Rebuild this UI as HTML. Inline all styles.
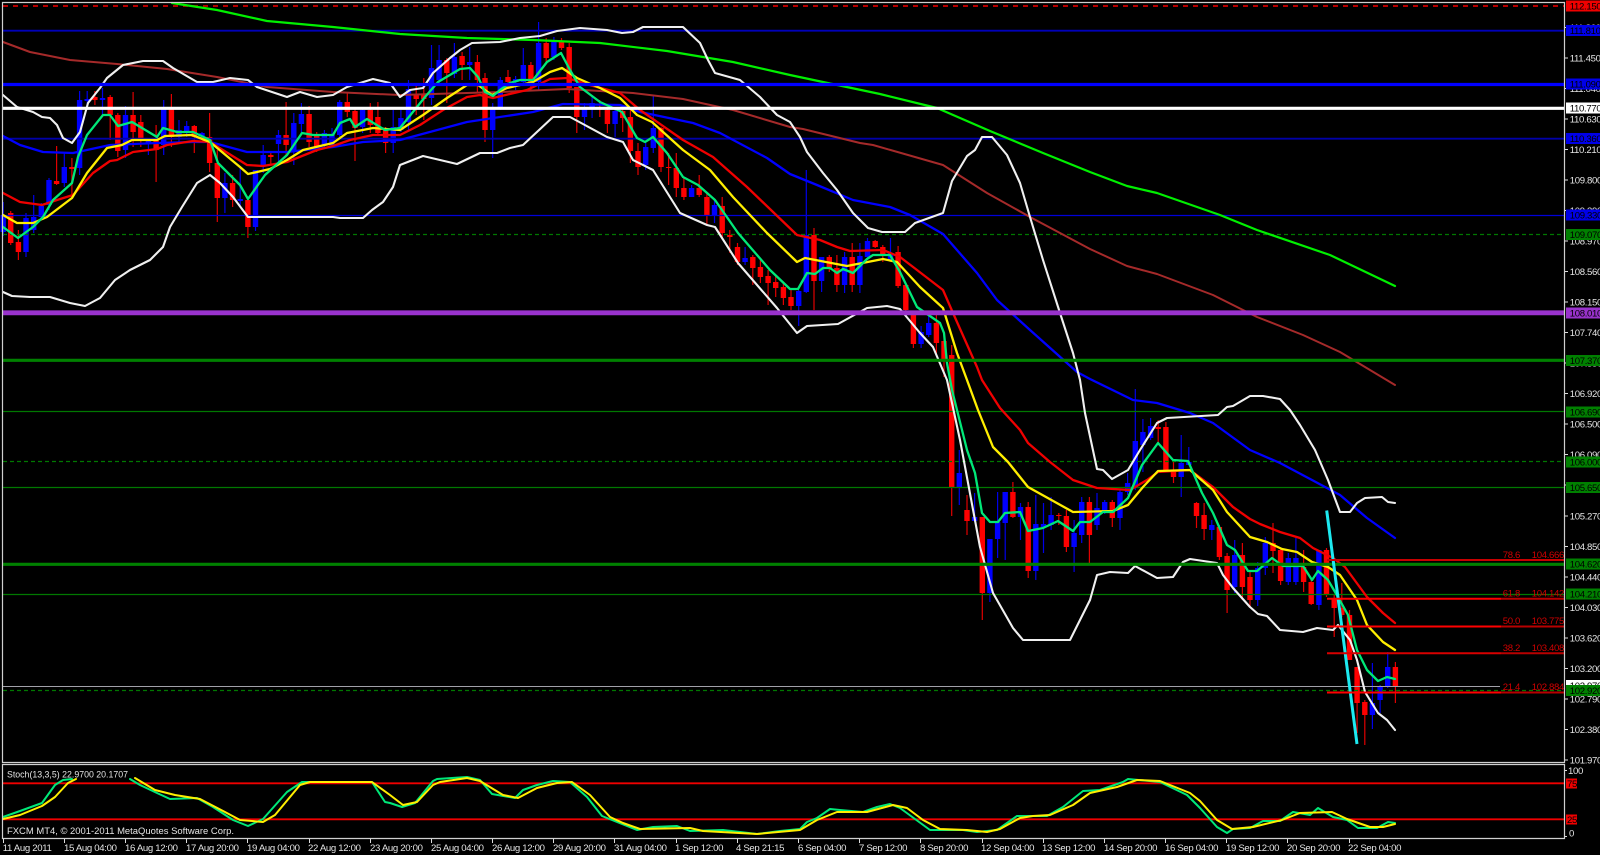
<!DOCTYPE html>
<html><head><meta charset="utf-8"><title>FXCM MT4 chart</title>
<style>
html,body{margin:0;padding:0;background:#000;width:1600px;height:855px;overflow:hidden}
svg{display:block;position:absolute;left:0;top:0}
text{font-family:"Liberation Sans",sans-serif;font-size:9.6px;letter-spacing:-.33px;fill:#e4e4e4}
.k{fill:#000}
.f{fill:#d00000}
.l{fill:none;stroke-linejoin:round;stroke-linecap:round}
</style></head><body>
<svg width="1600" height="855" viewBox="0 0 1600 855" xmlns="http://www.w3.org/2000/svg">
<rect width="1600" height="855" fill="#000"/>

<!-- red candles -->
<path fill="none" stroke="#e00000" stroke-width="1.2" d="M10.7 211V245M18.4 230V260M56.6 146V185M71.9 158V197M94.9 91V105M110.2 95V140M117.8 113V157M133.1 92V147M140.8 115V147M156.1 125V182M171.4 94V147M194.3 125V153M209.6 113V172M217.3 150V222M232.6 175V207M247.9 198V238M270.8 152V165M286.1 102V155M309.1 106V147M316.7 132V152M347.3 93V117M355 107V161M370.3 103V133M377.9 102V135M385.6 127V153M416.2 86V115M423.8 78V120M446.8 58V103M462.1 52V80M477.4 55V92M485 73V142M508 70V88M530.9 62V90M546.2 38V63M561.5 38V50M569.2 43V93M576.8 87V133M599.8 100V117M607.4 107V133M622.7 107V132M630.4 110V163M638 143V175M661 127V172M668.6 153V185M676.3 153V197M683.9 178V200M699.2 175V197M706.9 192V225M722.2 197V238M729.8 230V253M737.5 243V265M752.8 255V285M760.4 260V283M768.1 270V305M775.7 275V297M783.4 283V305M791 290V310M814 228V310M829.3 255V272M836.9 255V292M852.2 243V292M875.2 240V248M882.8 245V262M898.1 246V288M905.8 285V312M913.4 315V348M936.4 315V355M944 332V377M951.7 345V516M967 495V535M982.3 517V620M1012.9 482V518M1028.2 502V578M1058.8 513V525M1066.4 510V552M1089.4 497V563M1112.3 500V527M1158.2 420V443M1165.9 422V472M1173.5 462V483M1196.5 502V528M1204.1 503V540M1219.4 525V560M1227.1 553V613M1242.4 543V600M1250 572V607M1273 523V573M1280.6 548V585M1303.6 550V592M1311.2 580V605M1326.5 548V597M1334.2 595V637M1341.8 583V617M1349.5 610V660M1357.1 667V733M1364.8 700V745M1395.4 662V703"/>
<path fill="none" stroke="#ff0000" stroke-width="5.4" d="M10.7 213V243M18.4 242V252M56.6 181V184M71.9 167V169M94.9 97V100M110.2 97V115M117.8 115V151M133.1 115V132M140.8 122V138M156.1 140V150M171.4 107V137M194.3 126V137M209.6 137V163M217.3 163V198M232.6 183V200M247.9 200V227M270.8 155V157M286.1 135V145M309.1 114V142M316.7 134V147M347.3 102V112M355 111V128M370.3 110V125M377.9 117V133M385.6 130V143M416.2 95V99M423.8 95V99M446.8 60V73M462.1 56V65M477.4 62V80M485 78V130M508 77V82M530.9 65V82M546.2 43V58M561.5 42V48M569.2 47V88M576.8 87V117M599.8 107V109M607.4 110V124M622.7 111V118M630.4 117V151M638 151V167M661 128V167M668.6 167V168M676.3 168V188M683.9 188V197M699.2 188V195M706.9 197V215M722.2 206V233M729.8 235V237M737.5 247V262M752.8 257V268M760.4 267V277M768.1 276V283M775.7 282V288M783.4 287V298M791 297V306M814 235V281M829.3 257V268M836.9 268V285M852.2 257V285M875.2 241V247M882.8 247V255M898.1 252V286M905.8 285V310M913.4 315V344M936.4 323V343M944 341V360M951.7 355V488M967 510V521M982.3 517V593M1012.9 492V517M1028.2 507V571M1058.8 515V516M1066.4 516V547M1089.4 502V535M1112.3 502V518M1158.2 427V429M1165.9 427V470M1173.5 470V477M1196.5 503V516M1204.1 515V529M1219.4 527V557M1227.1 556V590M1242.4 555V587M1250 577V600M1273 543V551M1280.6 550V581M1303.6 567V582M1311.2 582V604M1326.5 550V595M1334.2 599V608M1341.8 608V615M1349.5 615V660M1357.1 667V703M1364.8 702V715M1395.4 667V687"/>
<!-- blue candles -->
<path fill="none" stroke="#0000e8" stroke-width="1.2" d="M3.2 202V236M26 213V257M33.7 195V233M41.3 203V219M49 178V210M64.3 152V187M79.6 91V175M87.2 91V110M102.5 88V115M125.5 106V158M148.4 140V155M163.7 100V155M179 120V143M186.7 121V137M202 132V140M224.9 173V213M240.2 168V205M255.5 170V231M263.2 145V173M278.5 130V165M293.8 113V165M301.4 103V135M324.4 130V147M332 128V147M339.7 100V137M362.6 107V133M393.2 110V153M400.9 110V132M408.5 80V130M431.5 45V105M439.1 45V85M454.4 43V78M469.7 47V80M492.7 103V158M500.3 77V110M515.6 76V90M523.3 48V85M538.6 22V90M553.9 37V60M584.5 103V130M592.1 97V118M615.1 108V137M645.7 143V170M653.3 95V153M691.6 185V197M714.5 200V223M745.1 247V265M798.7 290V326M806.3 170V293M821.6 257V292M844.6 252V293M859.9 243V293M867.5 238V258M890.5 238V260M921.1 326V348M928.7 315V337M959.3 450V505M974.6 493V522M989.9 539V602M997.6 492V558M1005.2 492V560M1020.5 503V540M1035.8 495V580M1043.5 503V553M1051.1 497V530M1074.1 520V572M1081.7 497V543M1097 493V530M1104.7 500V514M1120 490V530M1127.6 473V495M1135.3 389V490M1142.9 419V472M1150.6 418V440M1181.2 435V497M1188.8 447V465M1211.8 520V540M1234.7 540V593M1257.7 562V606M1265.3 537V575M1288.3 553V585M1295.9 538V585M1318.9 550V610M1372.4 663V729M1380.1 685V713M1387.7 652V688"/>
<path fill="none" stroke="#0000ff" stroke-width="5.4" d="M3.2 215V232M26 218V252M33.7 217V230M41.3 206V217M49 180V205M64.3 167V183M79.6 100V168M87.2 99V101M102.5 98V100M125.5 115V150M148.4 141V143M163.7 107V145M179 130V137M186.7 126V133M202 133V136M224.9 183V198M240.2 199V201M255.5 170V227M263.2 155V165M278.5 135V144M293.8 123V152M301.4 114V124M324.4 133V145M332 134V147M339.7 102V135M362.6 110V127M393.2 127V143M400.9 118V130M408.5 89V122M431.5 68V98M439.1 60V80M454.4 57V74M469.7 62V65M492.7 107V130M500.3 80V107M515.6 79V82M523.3 65V82M538.6 43V82M553.9 42V57M584.5 108V117M592.1 103V108M615.1 111V124M645.7 147V165M653.3 128V148M691.6 188V197M714.5 205V215M745.1 258V262M798.7 291V306M806.3 235V292M821.6 257V281M844.6 257V285M859.9 256V285M867.5 241V257M890.5 253V260M921.1 332V344M928.7 323V335M959.3 473V488M974.6 517V521M989.9 539V593M997.6 522V539M1005.2 492V523M1020.5 507V517M1035.8 524V571M1043.5 524V527M1051.1 515V525M1074.1 533V547M1081.7 502V535M1097 508V525M1104.7 502V513M1120 492V518M1127.6 483V492M1135.3 441V487M1142.9 432V445M1150.6 426V438M1181.2 463V477M1188.8 462V465M1211.8 525V530M1234.7 555V587M1257.7 568V600M1265.3 543V568M1288.3 558V582M1295.9 558V582M1318.9 550V605M1372.4 703V715M1380.1 686V700M1387.7 667V687"/>

<!-- thin horizontals -->
<g fill="none">
<path stroke="#d00000" stroke-width="1.8" stroke-dasharray="5 5" d="M3 6H1564"/>
<path stroke="#0000b8" stroke-width="1.8" d="M3 30.7H1564"/>
<path stroke="#0000a8" stroke-width="1.8" d="M3 138.7H1564"/>
<path stroke="#0000d8" stroke-width="1.2" d="M3 215.5H1564"/>
<path stroke="#007800" stroke-width="1.2" stroke-dasharray="4 3" d="M3 234.5H1564"/>
<path stroke="#007800" stroke-width="1.2" d="M3 411.5H1564"/>
<path stroke="#007800" stroke-width="1.2" stroke-dasharray="4 3" d="M3 461.5H1564"/>
<path stroke="#007800" stroke-width="1.2" d="M3 487.5H1564"/>
<path stroke="#007800" stroke-width="1.2" d="M3 594.5H1564"/>
<path stroke="#a0a0a8" stroke-width="1" d="M3 686.5H1500"/>
<path stroke="#007800" stroke-width="1.2" stroke-dasharray="4 3" d="M3 690.5H1564"/>
</g>

<!-- lime / brown / blue MAs -->
<polyline class="l" stroke="#00f000" stroke-width="2.2" points="172,3 217,10 267,21 333,27 400,34 467,38 533,40 600,43 667,51 733,62 790,75 823,82 880,94 937,108 990,131 1043,153 1090,172 1127,186 1157,193 1220,215 1257,230 1330,255 1395,286"/>
<polyline class="l" stroke="#a52a2a" stroke-width="2" points="3,42 30,52 70,60 117,64 167,69 217,77 267,87 333,92 400,95 433,94 500,92 567,89 633,93 683,99 733,110 790,127 803,129 860,143 873,145 943,165 987,193 1030,217 1090,249 1127,266 1157,274 1213,295 1257,317 1303,335 1340,352 1395,385"/>
<polyline class="l" stroke="#0000ff" stroke-width="2.3" points="3,136 20,145 43,152 73,153 110,145 157,143 193,142 210,142 247,152 287,152 333,147 363,142 400,140 467,122 533,112 563,104 620,105 640,112 693,123 720,133 767,158 790,174 817,185 853,200 890,207 910,215 943,234 977,273 997,300 1030,330 1077,372 1090,379 1133,400 1157,403 1190,413 1213,423 1250,450 1280,463 1312,480 1340,495 1367,518 1395,538"/>

<!-- Bollinger -->
<polyline class="l" stroke="#f0f0f0" stroke-width="2.1" points="3,95 17,107 33,112 42,117 50,118 57,125 63,138 72,143 80,132 88,103 100,88 107,78 123,65 143,61 163,61 173,68 197,82 213,82 230,78 248,80 257,87 287,97 300,92 317,97 333,95 347,87 373,79 390,83 400,97 410,90 423,88 433,73 450,58 460,50 472,43 500,42 520,38 540,36 557,31 580,28 607,30 622,33 633,32 643,27 683,27 700,43 708,60 715,73 740,80 760,97 777,115 790,122 800,137 807,152 823,173 837,190 853,213 868,228 882,232 905,232 915,223 943,213 952,181 967,156 975,150 982,137 992,137 1007,155 1020,183 1030,217 1043,260 1060,313 1073,353 1080,380 1085,413 1097,469 1103,470 1112,479 1128,470 1140,450 1157,423 1167,418 1218,415 1227,407 1233,406 1250,396 1263,396 1280,399 1290,410 1300,425 1315,450 1328,480 1340,512 1350,512 1357,503 1365,498 1382,497 1388,502 1395,503"/>
<polyline class="l" stroke="#f0f0f0" stroke-width="2.1" points="3,292 12,296 30,297 50,297 70,303 85,306 100,298 115,280 130,270 150,260 163,247 170,227 182,207 197,183 210,175 220,183 233,197 248,217 333,217 340,218 363,218 372,210 383,202 393,187 400,165 423,156 457,164 480,153 497,153 510,148 523,145 553,117 570,117 583,124 607,137 623,142 633,160 653,170 680,213 707,225 715,227 738,263 777,308 797,333 807,326 838,324 867,308 887,306 900,309 920,333 933,347 947,380 960,440 980,547 993,593 1013,628 1023,640 1070,640 1090,600 1097,575 1110,572 1128,573 1135,566 1157,578 1173,577 1183,562 1190,559 1217,563 1223,575 1233,588 1250,607 1258,614 1267,616 1280,630 1303,632 1317,628 1333,630 1338,625 1350,640 1357,660 1365,692 1378,713 1387,720 1395,730"/>

<!-- red MA -->
<polyline class="l" stroke="#f00000" stroke-width="2.3" points="3,193 20,202 42,205 57,200 73,195 93,173 110,161 117,160 133,152 157,149 167,145 193,141 210,142 247,165 263,166 287,162 317,150 333,146 350,140 373,135 400,135 420,125 443,110 467,97 480,95 493,98 527,90 550,79 567,78 593,86 620,93 640,110 683,140 713,157 747,187 797,235 820,240 837,247 850,251 883,250 900,257 917,270 943,290 953,313 977,367 982,380 1000,408 1020,430 1028,443 1050,462 1073,480 1097,488 1130,490 1147,480 1158,472 1190,470 1213,487 1233,507 1250,519 1260,524 1280,532 1300,538 1313,548 1333,558 1345,567 1367,597 1383,613 1395,623"/>
<!-- yellow MA -->
<polyline class="l" stroke="#ffee00" stroke-width="2.3" points="3,215 17,223 33,223 47,217 72,198 87,173 107,148 122,145 132,140 157,140 165,136 192,135 210,142 240,167 248,174 270,169 287,160 303,150 333,143 347,133 373,128 400,130 423,115 447,98 467,85 478,85 492,95 507,88 533,82 550,72 562,68 577,78 600,88 620,98 637,115 652,122 683,150 710,170 733,197 767,233 797,262 805,258 847,266 883,259 897,262 920,287 943,308 957,353 967,380 978,410 993,447 1008,462 1028,487 1073,512 1113,511 1128,505 1143,487 1158,471 1190,470 1213,490 1227,512 1250,537 1267,542 1282,549 1297,552 1312,562 1328,567 1340,575 1357,600 1367,625 1383,642 1395,650"/>
<!-- spring green MA -->
<polyline class="l" stroke="#00e878" stroke-width="2.3" points="3,227 18,238 33,227 43,217 53,200 72,183 78,157 87,135 103,115 110,115 118,126 132,122 157,137 163,128 177,132 193,132 210,140 218,163 240,185 248,199 265,175 287,155 302,133 313,135 333,135 340,123 350,119 355,127 367,119 385,130 400,128 425,97 438,82 460,69 470,68 478,77 485,92 493,96 500,90 510,83 520,80 533,80 547,62 561,53 570,70 580,87 600,102 622,112 637,138 645,142 653,137 667,153 683,177 698,185 715,200 738,233 770,270 790,289 798,289 807,273 815,274 823,268 830,268 837,273 843,269 853,273 867,259 873,255 890,255 900,272 917,307 940,323 944,333 947,363 952,390 967,450 975,473 982,513 990,522 998,522 1005,513 1020,512 1028,531 1043,528 1058,521 1073,531 1080,522 1090,522 1103,512 1113,512 1128,498 1142,465 1158,443 1173,460 1188,461 1202,493 1213,513 1227,545 1235,550 1248,571 1257,571 1272,558 1283,566 1303,566 1312,580 1318,571 1328,580 1338,597 1348,615 1357,650 1367,670 1378,681 1387,677 1395,679"/>

<!-- thick horizontals -->
<g fill="none">
<path stroke="#0000ff" stroke-width="3.2" d="M3 84.5H1564"/>
<path stroke="#ffffff" stroke-width="3.2" d="M3 108.3H1564"/>
<path stroke="#9932cc" stroke-width="4.8" d="M3 312.8H1564"/>
<path stroke="#008000" stroke-width="3.2" d="M3 360.3H1564"/>
<path stroke="#008000" stroke-width="3.2" d="M3 564.3H1564"/>
</g>

<!-- cyan trendline -->
<path stroke="#1de9f0" stroke-width="3" fill="none" d="M1326.7 510.5L1357 744"/>

<!-- fibonacci -->
<g fill="none" stroke-width="2">
<path stroke="#c80000" d="M1327 560H1564"/>
<path stroke="#ff0000" d="M1327 598.7H1501"/><path stroke="#b80000" d="M1501 598.7H1564"/>
<path stroke="#ff0000" d="M1327 626.5H1501"/><path stroke="#b80000" d="M1501 626.5H1564"/>
<path stroke="#d80000" d="M1327 653.3H1501"/><path stroke="#b80000" d="M1501 653.3H1564"/>
<path stroke="#ff0000" d="M1327 692.5H1501"/><path stroke="#b80000" d="M1501 692.5H1564"/>
</g>
<g>
<text class="f" x="1502.7" y="558">78.6</text><text class="f" x="1531.7" y="558">104.666</text>
<text class="f" x="1502.7" y="596.5">61.8</text><text class="f" x="1531.7" y="596.5">104.142</text>
<text class="f" x="1502.7" y="624">50.0</text><text class="f" x="1531.7" y="624">103.775</text>
<text class="f" x="1502.7" y="651">38.2</text><text class="f" x="1531.7" y="651">103.408</text>
<text class="f" x="1502.7" y="690">21.4</text><text class="f" x="1531.7" y="690">102.884</text>
</g>

<!-- stochastic -->
<path fill="none" stroke="#f00000" stroke-width="1.9" d="M3 783.3H1564M3 819.3H1564"/>
<polyline class="l" stroke="#00e878" stroke-width="2" points="3,817 20,811 42,803 55,785 63,780 72,779"/>
<polyline class="l" stroke="#00e878" stroke-width="2" points="130,779 140,785 157,793 170,799 197,798 213,807 233,820 248,826 263,819 287,792 302,782 372,782 385,802 390,803 402,807 415,803 433,781 437,779 467,777 480,780 492,794 515,798 523,790 537,785 553,781 570,782 587,797 602,816 617,822 637,830 653,827 677,826 690,831 723,830 757,834 780,831 800,829 807,822 817,818 830,809 840,810 863,812 877,807 890,804 900,808 930,830 963,830 977,832 997,830 1017,816 1047,816 1063,807 1083,791 1100,790 1123,782 1128,779 1160,782 1187,795 1200,808 1217,827 1227,833 1233,829 1250,828 1263,821 1280,821 1293,812 1310,815 1318,808 1333,817 1347,820 1358,828 1377,828 1388,822 1395,823"/>
<polyline class="l" stroke="#ffee00" stroke-width="2" points="3,819 20,815 42,806 55,797 68,783 76,779"/>
<polyline class="l" stroke="#ffee00" stroke-width="2" points="135,778 155,790 175,795 200,799 225,812 240,820 263,822 275,815 300,785 310,782 372,782 390,795 403,805 417,802 433,785 440,782 467,778 480,781 503,795 518,798 537,788 557,783 572,782 590,795 610,817 623,823 640,829 690,828 703,831 757,834 800,830 817,820 837,812 867,812 893,805 907,808 923,820 940,829 967,830 987,832 1000,829 1020,818 1033,816 1050,815 1073,805 1090,793 1117,787 1137,780 1160,781 1190,793 1200,801 1217,820 1232,829 1253,827 1282,820 1300,813 1332,812 1347,819 1370,827 1383,827 1395,824"/>
<text x="7" y="777.5" textLength="121" lengthAdjust="spacingAndGlyphs" style="letter-spacing:0">Stoch(13,3,5) 22.9700 20.1707</text>
<text x="7" y="834" textLength="227" lengthAdjust="spacingAndGlyphs" style="letter-spacing:0">FXCM MT4, © 2001-2011 MetaQuotes Software Corp.</text>

<!-- frames -->
<g fill="none" stroke="#d0d0d0" stroke-width="1.2">
<path d="M2.5 2.5H1564.5V762.5H2.5Z"/>
<path d="M2.5 764.5H1564.5V838.5H2.5Z"/>
</g>

<!-- price ticks -->
<path fill="none" stroke="#dddddd" stroke-width="1" d="M1565 760H1568M1565 729.5H1568M1565 699H1568M1565 668.5H1568M1565 638H1568M1565 607.5H1568M1565 577H1568M1565 546.5H1568M1565 516H1568M1565 485H1568M1565 454.5H1568M1565 424H1568M1565 393.5H1568M1565 363H1568M1565 332.5H1568M1565 302H1568M1565 271.5H1568M1565 241H1568M1565 210.5H1568M1565 180H1568M1565 149.5H1568M1565 119H1568M1565 88.5H1568M1565 58H1568M1565 27.5H1568"/>
<g>
<text x="1569.7" y="763.5">101.970</text><text x="1569.7" y="733">102.380</text><text x="1569.7" y="702.5">102.790</text><text x="1569.7" y="672">103.200</text><text x="1569.7" y="641.5">103.620</text><text x="1569.7" y="611">104.030</text><text x="1569.7" y="580.5">104.440</text><text x="1569.7" y="550">104.850</text><text x="1569.7" y="519.5">105.270</text><text x="1569.7" y="488.5">105.680</text><text x="1569.7" y="458">106.090</text><text x="1569.7" y="427.5">106.500</text><text x="1569.7" y="397">106.920</text><text x="1569.7" y="366.5">107.330</text><text x="1569.7" y="336">107.740</text><text x="1569.7" y="305.5">108.150</text><text x="1569.7" y="275">108.560</text><text x="1569.7" y="244.5">108.970</text><text x="1569.7" y="214">109.390</text><text x="1569.7" y="183.5">109.800</text><text x="1569.7" y="153">110.210</text><text x="1569.7" y="122.5">110.630</text><text x="1569.7" y="92">111.040</text><text x="1569.7" y="61.5">111.450</text><text x="1569.7" y="31">111.860</text>
</g>
<!-- price labels -->
<g>
<rect x="1566" y="0.5" width="34" height="11" fill="#f00000"/><text class="k" x="1569.7" y="9.5">112.150</text>
<rect x="1566" y="25" width="34" height="11" fill="#0000e8"/><text class="k" x="1569.7" y="34">111.810</text>
<rect x="1566" y="78.5" width="34" height="11" fill="#0000e8"/><text class="k" x="1569.7" y="87.5">111.090</text>
<rect x="1566" y="102.5" width="34" height="11" fill="#ffffff"/><text class="k" x="1569.7" y="111.5">110.770</text>
<rect x="1566" y="133" width="34" height="11" fill="#0000e8"/><text class="k" x="1569.7" y="142">110.360</text>
<rect x="1566" y="209.5" width="34" height="11" fill="#0000e8"/><text class="k" x="1569.7" y="218.5">109.330</text>
<rect x="1566" y="229" width="34" height="11" fill="#008000"/><text class="k" x="1569.7" y="238">109.070</text>
<rect x="1566" y="307.5" width="34" height="11" fill="#9932cc"/><text class="k" x="1569.7" y="316.5">108.010</text>
<rect x="1566" y="355" width="34" height="11" fill="#008000"/><text class="k" x="1569.7" y="364">107.370</text>
<rect x="1566" y="406.5" width="34" height="11" fill="#008000"/><text class="k" x="1569.7" y="415.5">106.690</text>
<rect x="1566" y="456.5" width="34" height="11" fill="#008000"/><text class="k" x="1569.7" y="465.5">106.000</text>
<rect x="1566" y="482" width="34" height="11" fill="#008000"/><text class="k" x="1569.7" y="491">105.650</text>
<rect x="1566" y="558.5" width="34" height="11" fill="#008000"/><text class="k" x="1569.7" y="567.5">104.620</text>
<rect x="1566" y="588.5" width="34" height="11" fill="#008000"/><text class="k" x="1569.7" y="597.5">104.210</text>
<rect x="1566" y="680" width="34" height="11" fill="#ffffff"/><text class="k" x="1569.7" y="689">102.970</text>
<rect x="1566" y="685" width="34" height="11" fill="#008000"/><text class="k" x="1569.7" y="694">102.920</text>
</g>
<!-- stoch scale -->
<text x="1568" y="774">100</text>
<rect x="1566" y="778.5" width="11" height="10" fill="#f00000"/><text class="k" x="1567" y="787">75</text>
<rect x="1566" y="814.5" width="11" height="10" fill="#f00000"/><text class="k" x="1567" y="823">25</text>
<text x="1569" y="836.5">0</text>
<path fill="none" stroke="#dddddd" d="M1565 770.5H1567M1565 836.5H1567"/>

<!-- time ticks & labels -->
<path fill="none" stroke="#dddddd" stroke-width="1" d="M3.5 839V843M64.5 839V843M125.5 839V843M186.5 839V843M247.5 839V843M309.5 839V843M370.5 839V843M431.5 839V843M492.5 839V843M553.5 839V843M614.5 839V843M676.5 839V843M737.5 839V843M798.5 839V843M859.5 839V843M920.5 839V843M982.5 839V843M1043.5 839V843M1104.5 839V843M1165.5 839V843M1226.5 839V843M1287.5 839V843M1349.5 839V843"/>
<g>
<text x="2.7" y="851">11 Aug 2011</text><text x="64" y="851">15 Aug 04:00</text><text x="125" y="851">16 Aug 12:00</text><text x="186" y="851">17 Aug 20:00</text><text x="247" y="851">19 Aug 04:00</text><text x="308" y="851">22 Aug 12:00</text><text x="370" y="851">23 Aug 20:00</text><text x="431" y="851">25 Aug 04:00</text><text x="492" y="851">26 Aug 12:00</text><text x="553" y="851">29 Aug 20:00</text><text x="614" y="851">31 Aug 04:00</text><text x="675" y="851">1 Sep 12:00</text><text x="736" y="851">4 Sep 21:15</text><text x="798" y="851">6 Sep 04:00</text><text x="859" y="851">7 Sep 12:00</text><text x="920" y="851">8 Sep 20:00</text><text x="981" y="851">12 Sep 04:00</text><text x="1042" y="851">13 Sep 12:00</text><text x="1104" y="851">14 Sep 20:00</text><text x="1165" y="851">16 Sep 04:00</text><text x="1226" y="851">19 Sep 12:00</text><text x="1287" y="851">20 Sep 20:00</text><text x="1348" y="851">22 Sep 04:00</text>
</g>
</svg>
</body></html>
